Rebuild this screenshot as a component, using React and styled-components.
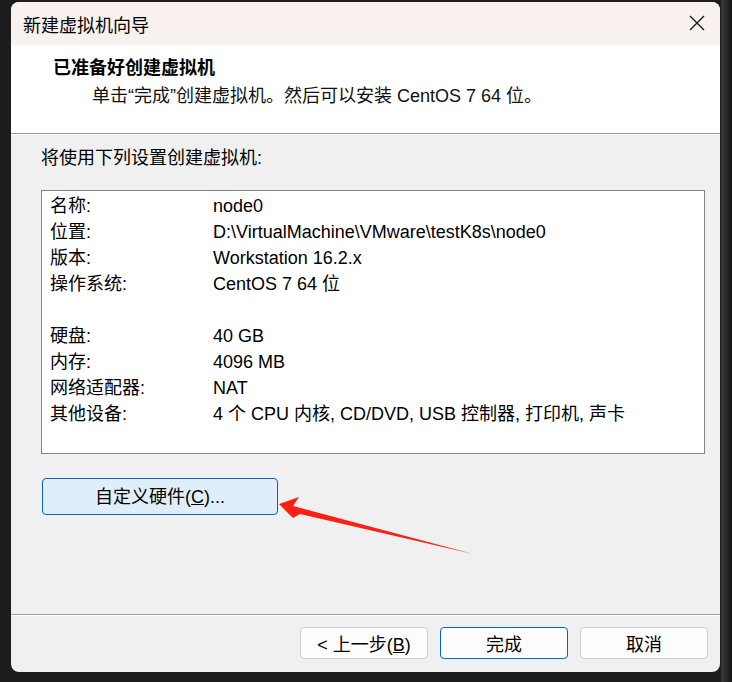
import React from "react";
import styled, { createGlobalStyle } from "styled-components";

const GlobalStyle = createGlobalStyle`
	html, body {
		margin: 0;
		padding: 0;
		background: #1c1c1c;
	}

	body {
		font-family: "Liberation Sans", "Noto Sans CJK SC", sans-serif;
		color: #000;
	}
`;

const settings = [
	{ label: "名称:", value: "node0" },
	{ label: "位置:", value: "D:\\VirtualMachine\\VMware\\testK8s\\node0" },
	{ label: "版本:", value: "Workstation 16.2.x" },
	{ label: "操作系统:", value: "CentOS 7 64 位" },
	null,
	{ label: "硬盘:", value: "40 GB" },
	{ label: "内存:", value: "4096 MB" },
	{ label: "网络适配器:", value: "NAT" },
	{ label: "其他设备:", value: "4 个 CPU 内核, CD/DVD, USB 控制器, 打印机, 声卡" },
];

export default function App() {
	return (
		<>
			<GlobalStyle />
			<Screen>
				<Dialog>
					<TitleBar>
						<span>新建虚拟机向导</span>
						<CloseButton aria-label="关闭">
							<svg width="16" height="16" viewBox="0 0 16 16">
								<path
									d="M1 1 L15 15 M15 1 L1 15"
									stroke="#1a1a1a"
									strokeWidth="1.4"
									fill="none"
								/>
							</svg>
						</CloseButton>
					</TitleBar>

					<Header>
						<HeaderTitle>已准备好创建虚拟机</HeaderTitle>
						<HeaderText>单击“完成”创建虚拟机。然后可以安装 CentOS 7 64 位。</HeaderText>
					</Header>

					<Body>
						<Intro>将使用下列设置创建虚拟机:</Intro>
						<SummaryBox>
							{settings.map((row, i) =>
								row ? (
									<Row key={i}>
										<span>{row.label}</span>
										<span>{row.value}</span>
									</Row>
								) : (
									<Row key={i} />
								)
							)}
						</SummaryBox>
						<CustomizeButton>
							自定义硬件(<u>C</u>)...
						</CustomizeButton>
					</Body>

					<Footer>
						<DialogButton>
							&lt; 上一步(<u>B</u>)
						</DialogButton>
						<DialogButton $primary>完成</DialogButton>
						<DialogButton>取消</DialogButton>
					</Footer>
				</Dialog>

				<Arrow width="732" height="682" viewBox="0 0 732 682">
					<polygon
						points="279,504 299,497 293,506 473,554 300,514 293,518"
						fill="#ff1e12"
					/>
				</Arrow>
			</Screen>
		</>
	);
}

const Screen = styled.div`
	position: relative;
	width: 732px;
	height: 682px;
	box-sizing: border-box;
	padding: 2px 12px 10px 11px;
	overflow: hidden;
	background: linear-gradient(
		to right,
		#1c1c1c 0,
		#1c1c1c 720px,
		#3a3a3a 722px,
		#141414 732px
	);
`;

const Dialog = styled.div`
	display: flex;
	flex-direction: column;
	height: 100%;
	border-radius: 8px;
	overflow: hidden;
	background: #f0f0f0;
`;

const TitleBar = styled.div`
	display: flex;
	align-items: center;
	justify-content: space-between;
	height: 43px;
	flex-shrink: 0;
	padding: 0 15px 0 12px;
	background: #f9f1ee;
	font-size: 18px;
`;

const CloseButton = styled.button`
	display: flex;
	align-items: center;
	justify-content: center;
	padding: 0;
	border: none;
	background: transparent;
	margin-top: -2px;
`;

const Header = styled.div`
	display: flex;
	flex-direction: column;
	gap: 2px;
	height: 89px;
	flex-shrink: 0;
	box-sizing: border-box;
	padding: 10px 0 0 42px;
	background: #fff;
	border-bottom: 1px solid #a0a0a0;
	font-size: 18px;
	line-height: 26px;
`;

const HeaderTitle = styled.div`
	font-weight: bold;
`;

const HeaderText = styled.div`
	padding-left: 39px;
	color: #111;
`;

const Body = styled.div`
	display: flex;
	flex-direction: column;
	align-items: flex-start;
	flex: 1;
	padding: 10px 15px 0 30px;
	border-top: 1px solid #fff;
	border-bottom: 1px solid #a0a0a0;
	font-size: 18px;
	line-height: 26px;
`;

const Intro = styled.div``;

const SummaryBox = styled.div`
	align-self: stretch;
	box-sizing: border-box;
	height: 264px;
	margin-top: 19px;
	padding: 2px 8px;
	background: #fff;
	border: 1px solid #848484;
`;

const Row = styled.div`
	display: grid;
	grid-template-columns: 163px 1fr;
	height: 26px;
	white-space: nowrap;
`;

const CustomizeButton = styled.button`
	width: 236px;
	height: 37px;
	margin: 24px 0 0 1px;
	padding: 0;
	border: 1px solid #0067c0;
	border-radius: 4px;
	background: #e0eef9;
	font: inherit;
	font-size: 18px;
	color: #000;
`;

const Footer = styled.div`
	display: flex;
	justify-content: flex-end;
	gap: 12px;
	height: 57px;
	flex-shrink: 0;
	box-sizing: border-box;
	padding: 11px 12px 0 0;
	border-top: 1px solid #fff;
`;

const DialogButton = styled.button`
	width: 128px;
	height: 32px;
	padding: 0;
	border: 1px solid ${(p) => (p.$primary ? "#0067c0" : "#d0d0d0")};
	border-radius: 4px;
	background: #fdfdfd;
	font: inherit;
	font-size: 18px;
	color: #000;
`;

const Arrow = styled.svg`
	position: absolute;
	top: 0;
	left: 0;
	pointer-events: none;
`;
